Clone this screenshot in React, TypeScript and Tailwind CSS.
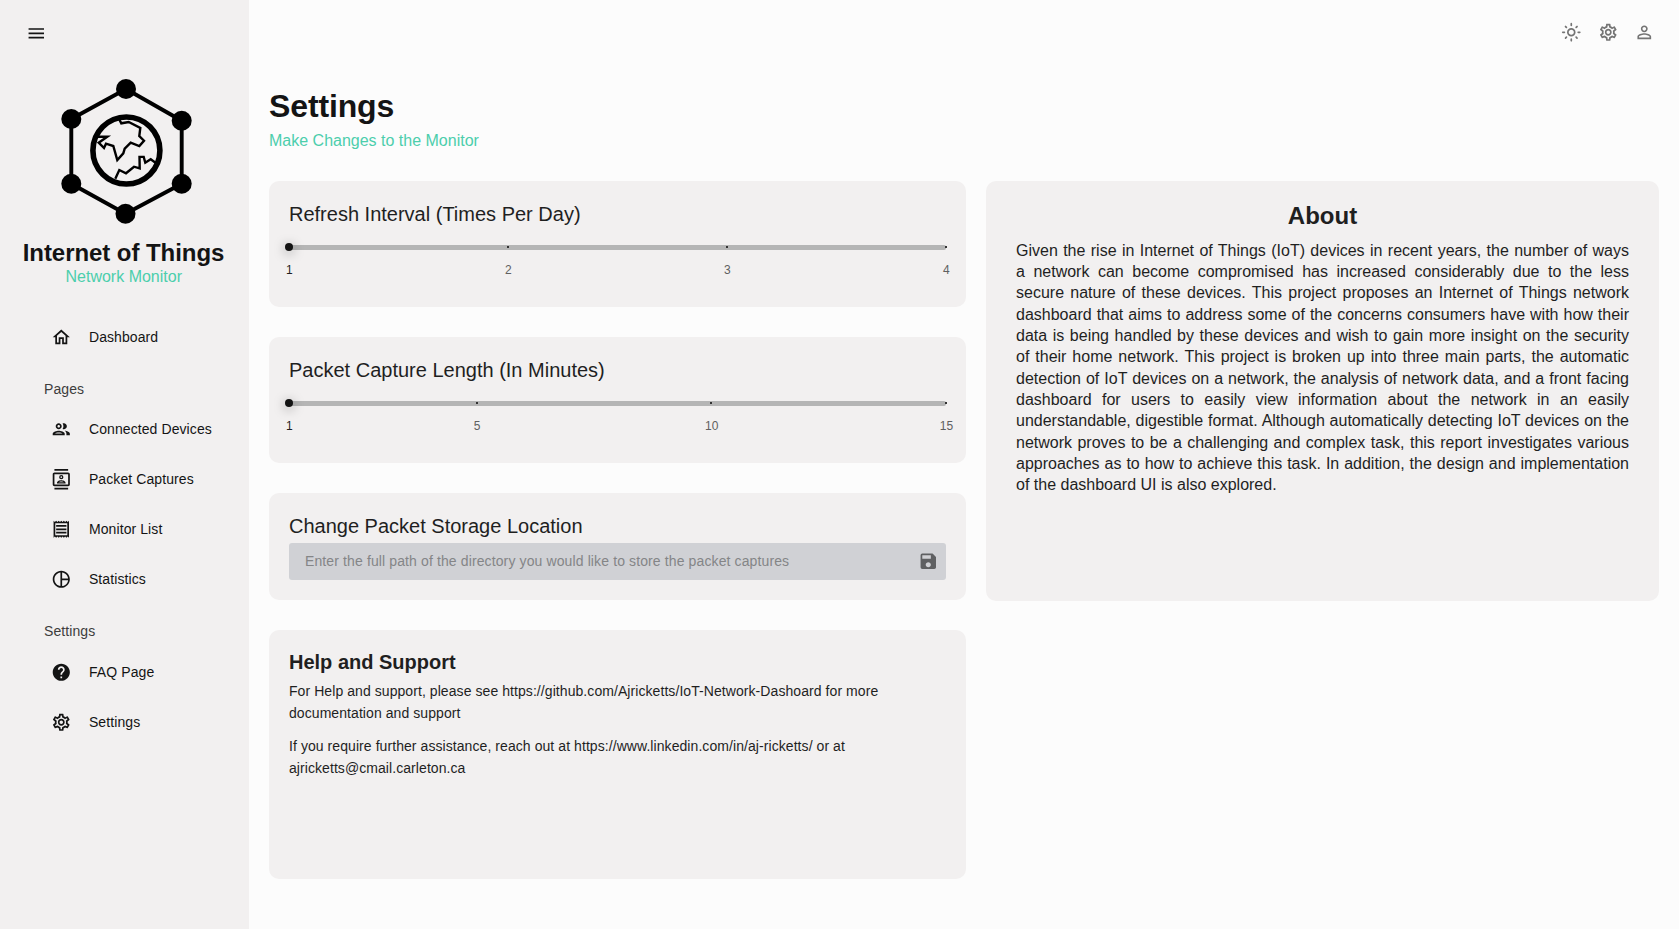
import React from "react";
import {
  MdMenu,
  MdOutlineHome,
  MdOutlineContacts,
  MdOutlineReceipt,
  MdHelp,
  MdOutlineSettings,
  MdOutlineLightMode,
  MdSave,
} from "react-icons/md";

type IconProps = { className?: string };

const ICON = "size-[20.57px] shrink-0";

function SvgIcon({ d, className }: { d: string; className?: string }) {
  return (
    <svg viewBox="0 0 24 24" fill="currentColor" className={className}>
      <path d={d} />
    </svg>
  );
}

function PeopleIcon({ className }: IconProps) {
  return (
    <SvgIcon
      className={className}
      d="M9 13.75c-2.34 0-7 1.17-7 3.5V19h14v-1.75c0-2.33-4.66-3.5-7-3.5zM4.34 17c.84-.58 2.87-1.25 4.66-1.25s3.82.67 4.66 1.25H4.34zM9 12c1.93 0 3.5-1.57 3.5-3.5S10.93 5 9 5 5.5 6.57 5.5 8.5 7.07 12 9 12zm0-5c.83 0 1.5.67 1.5 1.5S9.83 10 9 10s-1.5-.67-1.5-1.5S8.17 7 9 7zm7.04 6.81c1.16.84 1.96 1.96 1.96 3.44V19h4v-1.75c0-2.02-3.5-3.17-5.96-3.44zM15 12c1.93 0 3.5-1.57 3.5-3.5S16.93 5 15 5c-.54 0-1.04.13-1.5.35.63.89 1 1.98 1 3.15s-.37 2.26-1 3.15c.46.22.96.35 1.5.35z"
    />
  );
}

function PieIcon({ className }: IconProps) {
  return (
    <SvgIcon
      className={className}
      d="M12 2C6.48 2 2 6.48 2 12s4.48 10 10 10 10-4.48 10-10S17.52 2 12 2zm1 2.07c3.61.45 6.48 3.33 6.93 6.93H13V4.07zM4 12c0-4.06 3.07-7.44 7-7.93v15.87c-3.93-.5-7-3.88-7-7.94zm9 7.93V13h6.93c-.45 3.61-3.32 6.48-6.93 6.93z"
    />
  );
}

function PersonIcon({ className }: IconProps) {
  return (
    <SvgIcon
      className={className}
      d="M12 5.9c1.16 0 2.1.94 2.1 2.1s-.94 2.1-2.1 2.1S9.9 9.16 9.9 8s.94-2.1 2.1-2.1m0 9c2.97 0 6.1 1.46 6.1 2.1v1.1H5.9V17c0-.64 3.13-2.1 6.1-2.1M12 4C9.79 4 8 5.79 8 8s1.79 4 4 4 4-1.79 4-4-1.79-4-4-4zm0 9c-2.67 0-8 1.34-8 4v3h16v-3c0-2.66-5.33-4-8-4z"
    />
  );
}

function Logo() {
  const nodes = [
    [126, 89],
    [181.7, 120.7],
    [181.7, 183.8],
    [125.5, 213.8],
    [71.3, 183.8],
    [71.3, 119],
  ];
  return (
    <svg viewBox="56 74 140 155" className="ml-[3px] h-[155px] w-[140px] shrink-0" fill="none" stroke="#000">
      <polygon points={nodes.map((n) => n.join(",")).join(" ")} strokeWidth="3.9" />
      {nodes.map(([x, y]) => (
        <circle key={`${x}-${y}`} cx={x} cy={y} r="10" fill="#000" stroke="none" />
      ))}
      <circle cx="126.4" cy="150.5" r="33.5" strokeWidth="5.6" />
      <path
        strokeWidth="2.4"
        d="M119.300 119.500L121.300 123.300L128.700 122L140.300 128L139.300 136L144 140.700L139.300 146L130.700 142.700L124.700 148.700L123.300 153.300L117.300 160L113.300 146L106 143.700L104 148L98.700 142.700L107.300 136.700L97 136.700M115.300 178.700L119.300 170L126 173.300L134 166.700L139.700 168.300L139.500 156.900L143.700 156.900L145.300 162.700L150.700 159.300L155.500 162.700"
      />
    </svg>
  );
}

function NavItem({ icon, label }: { icon: React.ReactNode; label: string }) {
  return (
    <a className="flex h-[50px] items-center pl-[50.7px]">
      {icon}
      <span className="ml-[17.7px] text-sm leading-[22.4px] tracking-[0.0065em]">{label}</span>
    </a>
  );
}

function NavHeading({ label }: { label: string }) {
  return (
    <h6 className="pl-11 text-sm leading-[22.4px] tracking-[0.0065em] text-[#3d3d3d]">{label}</h6>
  );
}

function Sidebar() {
  return (
    <aside className="flex w-[249px] shrink-0 flex-col bg-[#f2f0f0] text-[#141414]">
      <div className="flex h-[74px] items-start pt-[23px] pl-[25.7px]">
        <MdMenu className={ICON} />
      </div>
      <div className="flex h-[213px] flex-col items-center">
        <Logo />
        <h3 className="mt-[10px] -ml-[2px] text-2xl leading-7 font-bold tracking-[-0.0025em] whitespace-nowrap">
          Internet of Things
        </h3>
        <h5 className="-mt-px -ml-[1.500px] text-base leading-[21.3px] text-[#4cceac]">Network Monitor</h5>
      </div>
      <nav className="mt-[25px] flex flex-col">
        <NavItem icon={<MdOutlineHome className={ICON} />} label="Dashboard" />
        <div className="pt-[16px] pb-[4px]">
          <NavHeading label="Pages" />
        </div>
        <NavItem icon={<PeopleIcon className={ICON} />} label="Connected Devices" />
        <NavItem icon={<MdOutlineContacts className={ICON} />} label="Packet Captures" />
        <NavItem icon={<MdOutlineReceipt className={ICON} />} label="Monitor List" />
        <NavItem icon={<PieIcon className={ICON} />} label="Statistics" />
        <div className="pt-[16px] pb-[4px]">
          <NavHeading label="Settings" />
        </div>
        <NavItem icon={<MdHelp className={ICON} />} label="FAQ Page" />
        <NavItem icon={<MdOutlineSettings className={ICON} />} label="Settings" />
      </nav>
    </aside>
  );
}

function Slider({ min, max, marks }: { min: number; max: number; marks: number[] }) {
  const at = (v: number) => `${((v - min) / (max - min)) * 100}%`;
  return (
    <div className="relative mt-[18.300px] h-[5px] rounded-[2px] bg-[#b5b5b5]">
      {marks.map((m) => (
        <React.Fragment key={m}>
          <span
            className="absolute top-px size-[2px] -translate-x-px bg-[#333]"
            style={{ left: at(m) }}
          />
          <span
            className={`absolute top-[17px] -translate-x-1/2 pl-px text-xs leading-[17px] tracking-[0.01em] ${
              m === min ? "text-[#1f1f1f]" : "text-[#606060]"
            }`}
            style={{ left: at(m) }}
          >
            {m}
          </span>
        </React.Fragment>
      ))}
      <span className="absolute -top-[2px] -left-1 size-2 rounded-full bg-[#141414] shadow-[0_2px_12px_0_rgba(0,0,0,0.4)]" />
    </div>
  );
}

function Card({ className, children }: { className: string; children: React.ReactNode }) {
  return <section className={`rounded-[10px] bg-[#f2f0f0] ${className}`}>{children}</section>;
}

const H4 = "text-xl leading-[24.7px]";
const BODY = "text-sm leading-[22.4px] tracking-[0.005em]";

export default function App() {
  return (
    <div className="flex h-[929px] w-[1679px] overflow-hidden bg-[#fcfcfc] font-['Liberation_Sans',Arial,sans-serif] text-[#1f1f1f]">
      <Sidebar />
      <main className="flex flex-1 flex-col px-5">
        <header className="flex h-[87px] items-start justify-end pt-[22px] pr-[4.700px] text-[#747474]">
          <MdOutlineLightMode className={`${ICON} mr-[16.6px]`} />
          <MdOutlineSettings className={`${ICON} mr-[15.400px]`} />
          <PersonIcon className={ICON} />
        </header>
        <div className="h-[94px]">
          <h2 className="mb-[5px] text-[32px] leading-[38.4px] font-bold tracking-[-0.004em] text-[#141414]">
            Settings
          </h2>
          <h5 className="text-base leading-[21.3px] text-[#4cceac]">Make Changes to the Monitor</h5>
        </div>
        <div className="flex items-start gap-5">
          <div className="flex w-[697px] flex-col gap-[30px]">
            <Card className="h-[126px] p-5 pt-[21px]">
              <h4 className={H4}>Refresh Interval (Times Per Day)</h4>
              <Slider min={1} max={4} marks={[1, 2, 3, 4]} />
            </Card>
            <Card className="h-[126px] p-5 pt-[21px]">
              <h4 className={H4}>Packet Capture Length (In Minutes)</h4>
              <Slider min={1} max={15} marks={[1, 5, 10, 15]} />
            </Card>
            <Card className="h-[107px] p-5 pt-[21px]">
              <h4 className={H4}>Change Packet Storage Location</h4>
              <div className="mt-[4.300px] flex h-[37px] items-center justify-between rounded-[3px] bg-[#d0d1d5] pr-[7.700px] pl-4">
                <span className="-mt-[2px] text-sm leading-5 tracking-[0.0085em] text-[#848587]">
                  Enter the full path of the directory you would like to store the packet captures
                </span>
                <MdSave className={`${ICON} text-[#5f6062]`} />
              </div>
            </Card>
            <Card className="h-[249px] p-5">
              <h4 className={`${H4} font-bold`}>Help and Support</h4>
              <p className={`mt-[5.300px] ${BODY}`}>
                For Help and support, please see https://github.com/Ajricketts/IoT-Network-Dashoard for more
                <br />
                documentation and support
              </p>
              <p className={`mt-[10px] ${BODY}`}>
                If you require further assistance, reach out at https://www.linkedin.com/in/aj-ricketts/ or at
                <br />
                ajricketts@cmail.carleton.ca
              </p>
            </Card>
          </div>
          <Card className="h-[420px] w-[673px] px-[30px] pt-[21px]">
            <h3 className="text-center text-2xl leading-7 font-bold">About</h3>
            <p className="mt-[9.500px] text-justify text-base leading-[21.344px]">
              Given the rise in Internet of Things (IoT) devices in recent years, the number of ways a&nbsp;network can
              become compromised has increased considerably due to the less secure nature of these devices. This
              project proposes an Internet of Things network dashboard that aims to address some of the concerns
              consumers have with how their data is being handled by these devices and wish to gain more insight on
              the security of their home network. This project is broken up into three main parts, the automatic
              detection of IoT devices on a network, the analysis of network data, and a front facing dashboard for
              users to easily view information about the network in an easily understandable, digestible format.
              Although automatically detecting IoT devices on the network proves to be a challenging and complex
              task, this report investigates various approaches as to how to achieve this task. In addition, the
              design and implementation of the dashboard UI is also explored.
            </p>
          </Card>
        </div>
      </main>
    </div>
  );
}
